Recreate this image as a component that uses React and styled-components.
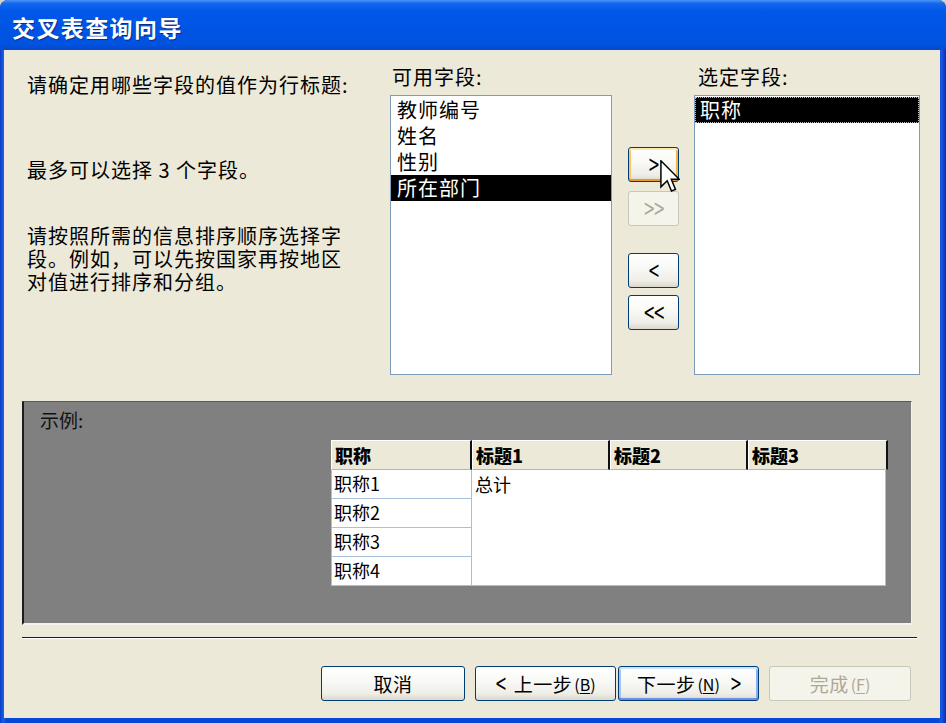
import React from 'react';
import styled, { createGlobalStyle, css } from 'styled-components';

const FONT = `"Noto Sans CJK SC", "Noto Sans", sans-serif`;

const GlobalStyle = createGlobalStyle`
  html, body { margin: 0; padding: 0; background: #d6d3c8; }
  body { font-family: ${FONT}; color: #000; }
  #root { width: 946px; height: 723px; }
`;

const Window = styled.div`
  width: 946px;
  height: 723px;
  box-sizing: border-box;
  display: flex;
  flex-direction: column;
  background: linear-gradient(90deg, #0a3fc8 0%, #1c5fe6 0.4%, #0848d8 0.6%, #0848d8 99.2%, #1a56e0 99.5%, #0630b8 100%);
  border-radius: 8px 8px 0 0;
  overflow: hidden;
`;

const TitleBar = styled.div`
  flex: none;
  height: 50px;
  box-sizing: border-box;
  display: flex;
  align-items: center;
  padding: 4px 0 0 12px;
  background: linear-gradient(180deg, #4a95fa 0%, #1566ee 7%, #0058e8 22%, #0054e3 60%, #0053e0 88%, #0648cc 100%);
  color: #fff;
  font-family: ${FONT};
  font-weight: 700;
  font-size: 23px;
  letter-spacing: 1.4px;
  text-shadow: 1px 1px 0 #0b2a8a;
`;

const Client = styled.div`
  flex: 1;
  min-height: 0;
  margin: 0 6px 5px 4px;
  background: #ece9d8;
  display: flex;
  flex-direction: column;
`;

const TopSection = styled.div`
  display: flex;
  padding: 14px 0 0 23px;
  height: 311px;
`;

const Intro = styled.div`
  width: 363px;
  flex: none;
  padding-top: 8px;
`;

const Text = styled.p`
  margin: ${p => p.$mt || 0}px 0 0 0;
  font-size: 20px;
  letter-spacing: 1px;
  line-height: ${p => p.$lh || 26}px;
  width: 330px;
`;

const FieldColumn = styled.div`
  display: flex;
  flex-direction: column;
  gap: 5px;
  flex: none;
  margin-left: ${p => p.$ml || 0}px;
`;

const Label = styled.div`
  height: 26px;
  line-height: 26px;
  font-size: 20px;
  letter-spacing: 1px;
  padding-left: ${p => p.$pl || 2}px;
`;

const ListBox = styled.div`
  width: ${p => p.$w}px;
  height: 280px;
  box-sizing: border-box;
  border: 1px solid #7f9db9;
  background: #fff;
  padding-top: 1px;
`;

const ListItem = styled.div`
  height: 26px;
  line-height: 26px;
  box-sizing: border-box;
  padding-left: ${p => p.$pl || 6}px;
  font-size: 20px;
  letter-spacing: 1px;
  white-space: nowrap;
  ${p => p.$selected && css`
    background: #000;
    color: #fff;
  `}
  ${p => p.$focus && css`
    border: 1px dotted #bbb;
    line-height: 24px;
    padding-left: ${(p.$pl || 6) - 1}px;
  `}
`;

const MoveColumn = styled.div`
  flex: none;
  margin-left: 16px;
  padding-top: 83px;
  display: flex;
  flex-direction: column;
  gap: 27px;
`;

const MoveGroup = styled.div`
  display: flex;
  flex-direction: column;
  gap: ${p => p.$gap || 8}px;
`;

const XPButton = styled.button`
  position: relative;
  width: ${p => p.$w}px;
  height: 35px;
  box-sizing: border-box;
  padding: 0;
  margin: 0;
  border: 1px solid ${p => (p.disabled ? '#c9c7ba' : '#003c74')};
  border-radius: 3px;
  background: ${p => (p.disabled
    ? '#f5f4ea'
    : 'linear-gradient(180deg, #ffffff 0%, #f9f9f6 40%, #efeee8 80%, #dcd8cc 100%)')};
  color: ${p => (p.disabled ? '#aca899' : '#000')};
  font-family: ${FONT};
  font-size: ${p => p.$fs || 19}px;
  letter-spacing: 0.5px;
  display: flex;
  align-items: center;
  justify-content: center;
  cursor: default;
  ${p => p.$variant === 'hot' && css`
    box-shadow: inset 0 2px 0 #ffe9a8, inset 0 -2px 0 #e69a2a, inset 2px 0 0 #fbc462, inset -2px 0 0 #f5b245;
  `}
  ${p => p.$variant === 'default' && css`
    box-shadow: inset 0 2px 0 #cde3ff, inset 0 -2px 0 #6b8fe8, inset 2px 0 0 #a6c4f2, inset -2px 0 0 #8aaef0;
  `}
`;

const Arrow = styled.span`
  font-family: "DejaVu Sans", sans-serif;
  font-size: 23px;
  line-height: 1;
  letter-spacing: -3px;
  transform: scaleX(0.62);
  display: inline-block;
  margin: 0 -3px;
`;

const Cursor = styled.svg`
  position: absolute;
  left: 31px;
  top: 12px;
  z-index: 2;
  pointer-events: none;
`;

const ExampleBox = styled.div`
  margin: 26px 28px 0 18px;
  height: 224px;
  box-sizing: border-box;
  background: #808080;
  border-top: 1px solid #5a5a5a;
  border-left: 2px solid #1c1c1c;
  border-right: 1px solid #f4f2ea;
  border-bottom: 2px solid #f4f2ea;
  padding: 6px 0 0 16px;
  display: flex;
  flex-direction: column;
`;

const ExampleLabel = styled.div`
  height: 24px;
  line-height: 24px;
  font-size: 19px;
  color: #111;
`;

const Grid = styled.div`
  display: grid;
  grid-template-columns: 141px 138px 138px 140px;
  grid-template-rows: 30px repeat(4, 29px);
  width: 557px;
  margin: 8px 0 0 291px;
`;

const HeadCell = styled.div`
  box-sizing: border-box;
  background: #ece9d8;
  border-top: 1px solid #fff;
  border-left: 1px solid #fff;
  border-right: 2px solid #111;
  border-bottom: 1px solid #a9b6c8;
  padding-left: 3px;
  font-family: ${FONT};
  font-weight: 900;
  font-size: 18px;
  line-height: 28px;
  white-space: nowrap;
`;

const RowCell = styled.div`
  box-sizing: border-box;
  background: #fff;
  border-left: 1px solid #a8c0dc;
  border-right: 1px solid #a8c0dc;
  border-bottom: 1px solid #a8c0dc;
  padding-left: 2px;
  font-size: 18px;
  line-height: 27px;
  white-space: nowrap;
`;

const TotalCell = styled.div`
  grid-column: 2 / 5;
  grid-row: 2 / 6;
  box-sizing: border-box;
  background: #fff;
  border-bottom: 1px solid #a8c0dc;
  border-right: 1px solid #a8c0dc;
  margin-right: 2px;
  padding: 0 0 0 3px;
  font-size: 18px;
  line-height: 28px;
`;

const Separator = styled.div`
  margin: 12px 23px 0 18px;
  height: 0;
  border-top: 1px solid #1a1a1a;
  border-bottom: 1px solid #fff;
`;

const ButtonRow = styled.div`
  margin-top: 27px;
  display: flex;
  justify-content: flex-end;
  padding-right: 29px;
  gap: 10px;
`;

const NavPair = styled.div`
  display: flex;
  gap: 2px;
`;

const Mnem = styled.span`
  font-size: 16px;
  letter-spacing: 0;
  margin-left: 2px;
  & u { text-underline-offset: 2px; }
`;

const Gap = styled.span`
  display: inline-block;
  width: ${p => p.$w}px;
`;

export default function App() {
  const available = ['教师编号', '姓名', '性别', '所在部门'];
  const rows = ['职称1', '职称2', '职称3', '职称4'];
  const heads = ['职称', '标题1', '标题2', '标题3'];

  return (
    <>
      <GlobalStyle />
      <Window>
        <TitleBar>交叉表查询向导</TitleBar>
        <Client>
          <TopSection>
            <Intro>
              <Text>请确定用哪些字段的值作为行标题:</Text>
              <Text $mt={59}>最多可以选择 3 个字段。</Text>
              <Text $mt={41} $lh={23}>请按照所需的信息排序顺序选择字段。例如，可以先按国家再按地区对值进行排序和分组。</Text>
            </Intro>
            <FieldColumn>
              <Label>可用字段:</Label>
              <ListBox $w={222}>
                {available.map((f, i) => (
                  <ListItem key={f} $selected={i === 3}>{f}</ListItem>
                ))}
              </ListBox>
            </FieldColumn>
            <MoveColumn>
              <MoveGroup $gap={9}>
                <XPButton $w={51} $variant="hot">
                  <Arrow>&gt;</Arrow>
                  <Cursor width="20" height="33" viewBox="0 0 12 20">
                    <path
                      d="M0.5 0.5 L0.5 16.3 L4.3 12.6 L6.9 18.8 L9.3 17.8 L6.8 11.7 L11.6 11.7 Z"
                      fill="#fff"
                      stroke="#000"
                      strokeWidth="0.9"
                      strokeLinejoin="miter"
                    />
                  </Cursor>
                </XPButton>
                <XPButton $w={51} disabled>
                  <Arrow>&gt;&gt;</Arrow>
                </XPButton>
              </MoveGroup>
              <MoveGroup $gap={7}>
                <XPButton $w={51}>
                  <Arrow>&lt;</Arrow>
                </XPButton>
                <XPButton $w={51}>
                  <Arrow>&lt;&lt;</Arrow>
                </XPButton>
              </MoveGroup>
            </MoveColumn>
            <FieldColumn $ml={15}>
              <Label $pl={4}>选定字段:</Label>
              <ListBox $w={226}>
                <ListItem $selected $focus $pl={5}>职称</ListItem>
              </ListBox>
            </FieldColumn>
          </TopSection>

          <ExampleBox>
            <ExampleLabel>示例:</ExampleLabel>
            <Grid>
              {heads.map(h => (
                <HeadCell key={h}>{h}</HeadCell>
              ))}
              {rows.map((r, i) => (
                <RowCell key={r} style={{ gridColumn: 1, gridRow: i + 2 }}>{r}</RowCell>
              ))}
              <TotalCell>总计</TotalCell>
            </Grid>
          </ExampleBox>

          <Separator />

          <ButtonRow>
            <XPButton $w={144}>取消</XPButton>
            <NavPair>
              <XPButton $w={141}>
                <Arrow>&lt;</Arrow><Gap $w={8} />上一步<Mnem>(<u>B</u>)</Mnem>
              </XPButton>
              <XPButton $w={141} $variant="default">
                下一步<Mnem>(<u>N</u>)</Mnem><Gap $w={10} /><Arrow>&gt;</Arrow>
              </XPButton>
            </NavPair>
            <XPButton $w={142} disabled>
              完成<Mnem>(<u>F</u>)</Mnem>
            </XPButton>
          </ButtonRow>
        </Client>
      </Window>
    </>
  );
}
